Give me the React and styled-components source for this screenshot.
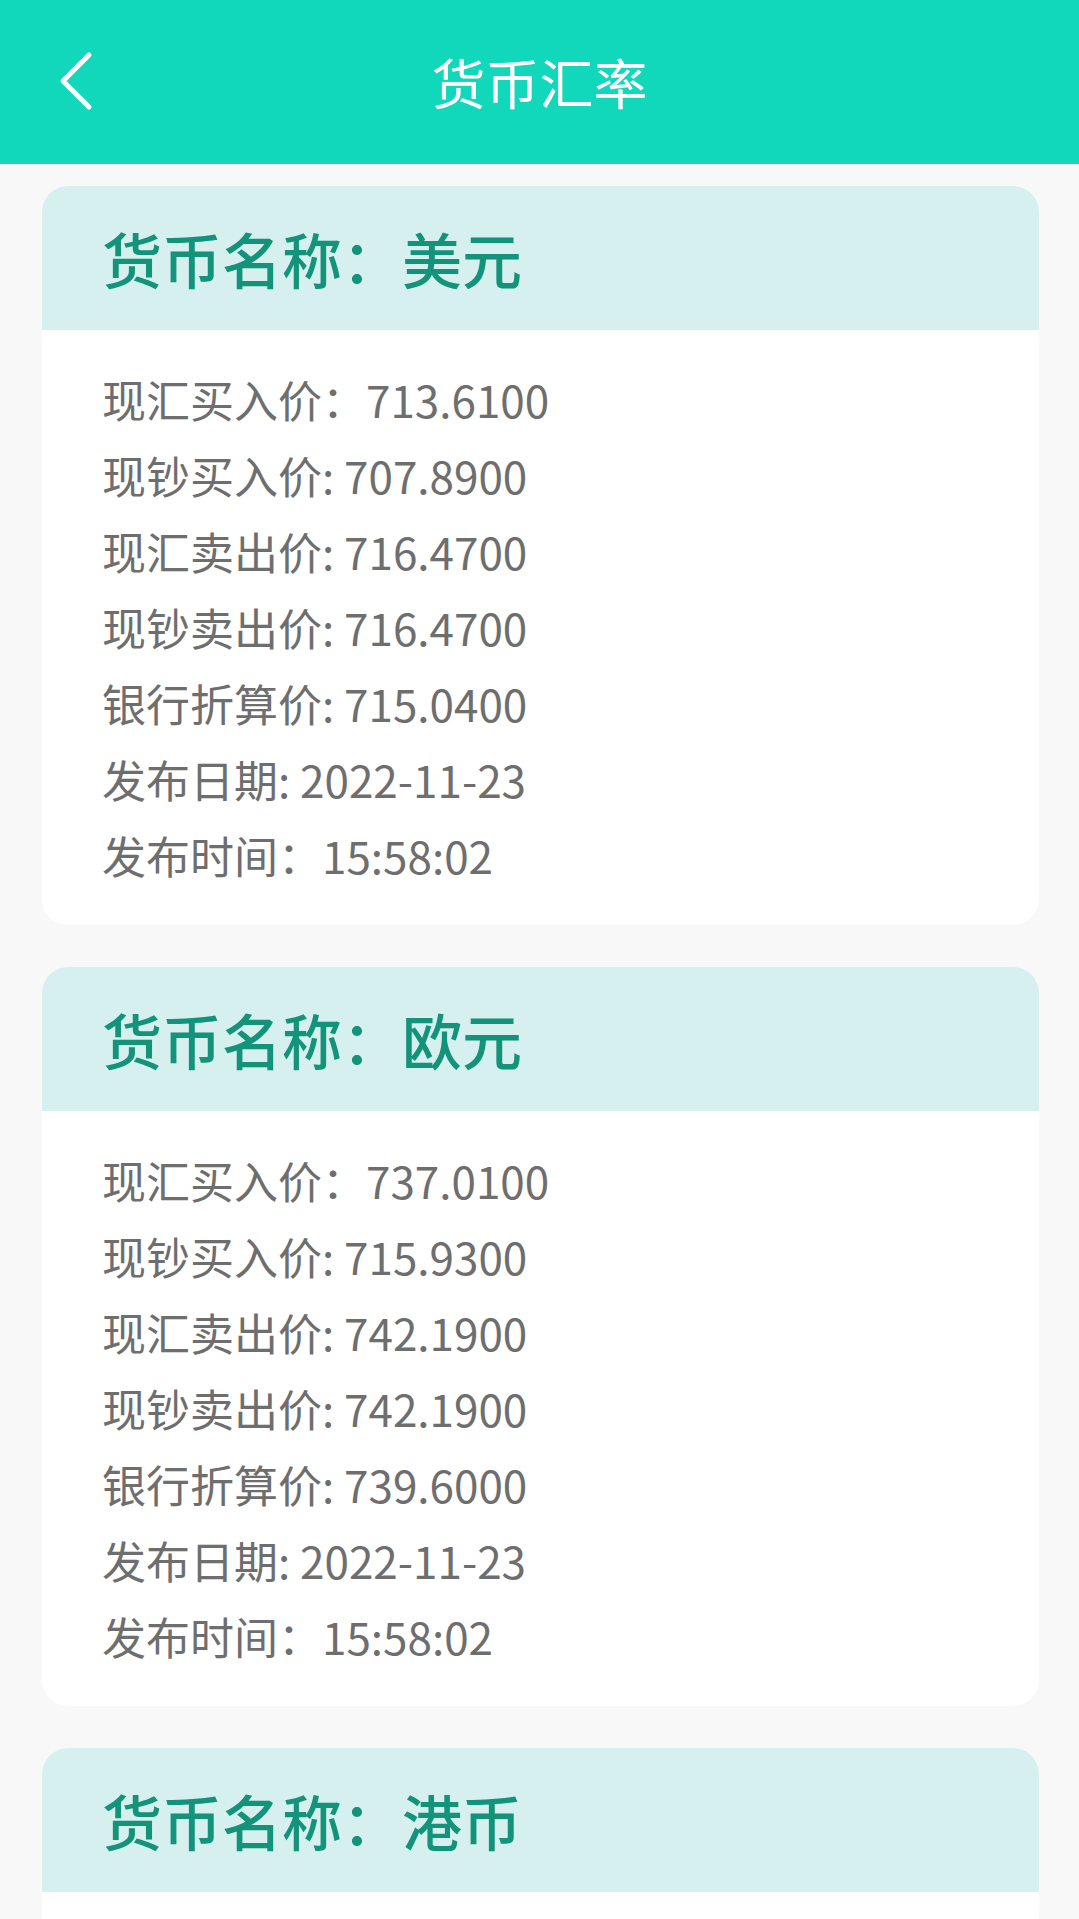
import React from 'react';
import styled, { createGlobalStyle } from 'styled-components';

const currencies = [
    {
        name: '美元',
        rows: [
            ['现汇买入价：', '713.6100'],
            ['现钞买入价: ', '707.8900'],
            ['现汇卖出价: ', '716.4700'],
            ['现钞卖出价: ', '716.4700'],
            ['银行折算价: ', '715.0400'],
            ['发布日期: ', '2022-11-23'],
            ['发布时间：', '15:58:02'],
        ],
    },
    {
        name: '欧元',
        rows: [
            ['现汇买入价：', '737.0100'],
            ['现钞买入价: ', '715.9300'],
            ['现汇卖出价: ', '742.1900'],
            ['现钞卖出价: ', '742.1900'],
            ['银行折算价: ', '739.6000'],
            ['发布日期: ', '2022-11-23'],
            ['发布时间：', '15:58:02'],
        ],
    },
    {
        name: '港币',
        rows: [
            ['现汇买入价：', '91.2500'],
            ['现钞买入价: ', '90.5300'],
            ['现汇卖出价: ', '91.6100'],
            ['现钞卖出价: ', '91.6100'],
            ['银行折算价: ', '91.4300'],
            ['发布日期: ', '2022-11-23'],
            ['发布时间：', '15:58:02'],
        ],
    },
];

export default function App() {
    return (
        <>
            <GlobalStyle />
            <Page>
                <NavBar>
                    <BackButton aria-label="返回">
                        <svg width="36" height="60" viewBox="0 0 36 60" fill="none">
                            <path
                                d="M31 4 L5 30 L31 56"
                                stroke="#ffffff"
                                strokeWidth="5"
                                strokeLinecap="round"
                                strokeLinejoin="round"
                            />
                        </svg>
                    </BackButton>
                    <Title>货币汇率</Title>
                    <span />
                </NavBar>
                <List>
                    {currencies.map((c) => (
                        <Card key={c.name}>
                            <CardHead>货币名称：{c.name}</CardHead>
                            <CardBody>
                                {c.rows.map(([label, value]) => (
                                    <Row key={label}>
                                        {label}
                                        {value}
                                    </Row>
                                ))}
                            </CardBody>
                        </Card>
                    ))}
                </List>
            </Page>
        </>
    );
}

const GlobalStyle = createGlobalStyle`
    html, body {
        margin: 0;
        padding: 0;
        background: #f8f8f9;
    }
    body {
        font-family: "Noto Sans CJK SC", "Noto Sans", sans-serif;
    }
`;

const Page = styled.div`
    width: 100%;
    height: 100vh;
    display: flex;
    flex-direction: column;
    background: #f8f8f9;
    overflow: hidden;
`;

const NavBar = styled.header`
    flex: none;
    height: 164px;
    background: #12d8bb;
    display: grid;
    grid-template-columns: 1fr auto 1fr;
    align-items: center;
    padding-left: 58px;
    box-sizing: border-box;
`;

const BackButton = styled.button`
    justify-self: start;
    display: flex;
    align-items: center;
    background: none;
    border: none;
    padding: 0;
    margin-top: -2px;
    cursor: pointer;
`;

const Title = styled.h1`
    margin: 0 0 0 -58px;
    color: #ffffff;
    font-size: 54px;
    font-weight: 400;
    line-height: 1;
`;

const List = styled.main`
    flex: 1;
    overflow-y: auto;
    display: flex;
    flex-direction: column;
    gap: 42px;
    padding: 22px 40px 40px 42px;
`;

const Card = styled.section`
    flex: none;
    background: #ffffff;
    border-radius: 26px;
    overflow: hidden;
`;

const CardHead = styled.div`
    height: 144px;
    display: flex;
    align-items: center;
    padding-left: 60px;
    background: #d5f0ee;
    color: #12937a;
    font-size: 60px;
    font-weight: 500;
    line-height: 1;
`;

const CardBody = styled.div`
    padding: 31px 60px 32px;
`;

const Row = styled.div`
    height: 76px;
    line-height: 76px;
    color: #6e6e6e;
    font-size: 44px;
    white-space: pre;
`;
